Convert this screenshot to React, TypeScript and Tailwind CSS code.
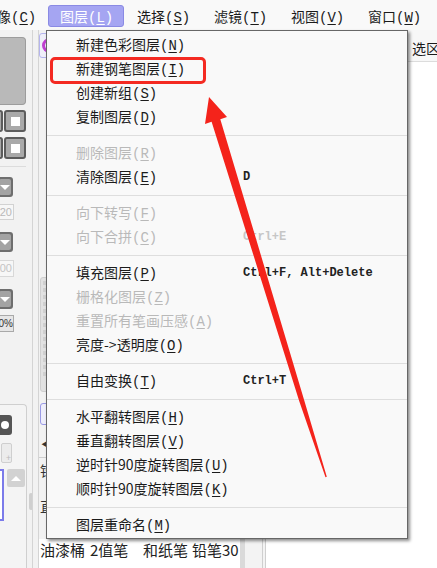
import React from 'react';

type Row =
  | { sep: true }
  | { label: string; k: string; shortcut?: string; off?: boolean };

const rows: Row[] = [
  { label: '新建色彩图层', k: 'N' },
  { label: '新建钢笔图层', k: 'I' },
  { label: '创建新组', k: 'S' },
  { label: '复制图层', k: 'D' },
  { sep: true },
  { label: '删除图层', k: 'R', off: true },
  { label: '清除图层', k: 'E', shortcut: 'D' },
  { sep: true },
  { label: '向下转写', k: 'F', off: true },
  { label: '向下合拼', k: 'C', off: true, shortcut: 'Ctrl+E' },
  { sep: true },
  { label: '填充图层', k: 'P', shortcut: 'Ctrl+F, Alt+Delete' },
  { label: '栅格化图层', k: 'Z', off: true },
  { label: '重置所有笔画压感', k: 'A', off: true },
  { label: '亮度->透明度', k: 'O' },
  { sep: true },
  { label: '自由变换', k: 'T', shortcut: 'Ctrl+T' },
  { sep: true },
  { label: '水平翻转图层', k: 'H' },
  { label: '垂直翻转图层', k: 'V' },
  { label: '逆时针90度旋转图层', k: 'U' },
  { label: '顺时针90度旋转图层', k: 'K' },
  { sep: true },
  { label: '图层重命名', k: 'M' },
];

// label + (X) with the mnemonic underlined
const Label = ({ text, k }: { text: string; k: string }) => (
  <span className="whitespace-nowrap">
    {text}
    <span className="font-['Liberation_Mono',monospace]">
      (<span className="underline underline-offset-2">{k}</span>)
    </span>
  </span>
);

const Drop = ({ className }: { className: string }) => (
  <div className={`${className} -ml-[3px] w-[16px] h-[20px] rounded-[3px] bg-[#6e6e6e] p-[2px]`}>
    <div className="h-full rounded-[2px] bg-[#a3a3a3] flex items-center justify-center">
      <div className="w-0 h-0 border-l-[5px] border-r-[5px] border-t-[5px] border-l-transparent border-r-transparent border-t-white" />
    </div>
  </div>
);

const Square = ({ className }: { className: string }) => (
  <div className={`${className} flex gap-[1px] -ml-[2px]`}>
    <div className="w-[5px] h-[22px] rounded-r-[3px] border-2 border-l-0 border-[#5c5c5c] bg-[#a9a9a9]" />
    <div className="w-[22px] h-[22px] rounded-[3px] border-2 border-[#5c5c5c] bg-[#a9a9a9] flex items-center justify-center">
      <div className="w-[9px] h-[9px] bg-white" />
    </div>
  </div>
);

const LeftPanel = () => (
  <div className="w-[33px] shrink-0 border-r border-[#d4d4d4] bg-[#f2f2f2] flex flex-col overflow-hidden">
    <div className="mt-[7px] w-[26px] h-[68px] rounded-r-[4px] border border-l-0 border-[#9c9c9c] bg-[#b9b9b9]" />
    <Square className="mt-[5px]" />
    <Square className="mt-[5px]" />
    <div className="mt-[7px] w-[26px] h-px bg-[#dcdcdc]" />
    <Drop className="mt-[10px]" />
    <div className="mt-[7px] -ml-[4px] w-[18px] h-[16px] border border-[#d2d2d2] bg-[#f7f7f7] text-right pr-[1px] text-[11px] leading-[14px] text-[#b9b9b9] font-['Liberation_Sans',sans-serif]">20</div>
    <Drop className="mt-[12px]" />
    <div className="mt-[8px] -ml-[4px] w-[18px] h-[17px] border border-[#d8d8d8] bg-[#f7f7f7] text-right pr-[1px] text-[11px] leading-[15px] text-[#c4c4c4] font-['Liberation_Sans',sans-serif]">00</div>
    <Drop className="mt-[12px]" />
    <div className="mt-[6px] -ml-[4px] w-[18px] h-[17px] border border-[#a9a9a9] bg-[#e6e6e6] text-right text-[10px] leading-[15px] text-[#333] font-['Liberation_Sans',sans-serif]">0%</div>
    <div className="mt-[72px] w-[27px] flex-1 rounded-tr-[4px] border-t border-r border-[#cfcfcf] bg-[#f4f4f4] flex flex-col">
      <div className="mt-[10px] -ml-[2px] w-[14px] h-[20px] rounded-[3px] bg-[#555] flex items-center justify-center">
        <div className="w-[8px] h-[8px] rounded-full bg-white" />
      </div>
      <div className="mt-[8px] ml-[1px] w-[11px] h-[20px] rounded-[2px] border border-[#cfcfcf] bg-[#ececec] flex items-end justify-end text-[9px] leading-[9px] text-[#bbb]">+</div>
      <div className="mt-[6px] flex gap-[3px]">
        <div className="w-[4px] h-[52px] border-2 border-l-0 border-[#7b7bea] bg-white" />
        <div className="w-[18px] h-[18px] rounded-[2px] bg-[#d2d2d2] flex items-center justify-center">
          <div className="w-0 h-0 border-l-[5px] border-r-[5px] border-b-[5px] border-l-transparent border-r-transparent border-b-white" />
        </div>
      </div>
      <div className="mt-[-28px] ml-[29px] w-[4px] h-[17px] rounded-[2px] bg-[#cfcfcf]" />
    </div>
  </div>
);

const Strip = () => (
  <div className="w-[8px] shrink-0 bg-[#f2f2f2] flex flex-col">
    <div className="mt-[3px] w-[20px] h-[25px] rounded-[3px] border border-[#b4b4ee] bg-[#efeff9] flex items-center pl-[2px]">
      <div className="w-[15px] h-[15px] rounded-full border-[3px] border-[#c040d0]" />
    </div>
    <div className="mt-[219px] ml-[1px] w-[10px] h-[115px] rounded-[3px] border border-[#cfcfcf] bg-[#e2e2e2] flex flex-col gap-[3px] pt-[3px] pl-[2px]">
      {Array.from({ length: 14 }).map((_, i) => (
        <div key={i} className="w-[4px] h-[4px] bg-[#d0d0d0]" />
      ))}
    </div>
    <div className="mt-[11px] ml-[1px] w-[10px] h-[22px] rounded-[3px] border border-[#9a9ae6] bg-[#eeeefb]" />
    <div className="mt-[14px] ml-[2px] text-[10px] leading-[10px] text-[#333]">◀</div>
    <div className="mt-[8px] h-px w-full bg-[#cfcfcf]" />
    <div className="mt-[4px] ml-[1px] text-[14px] leading-[16px] text-[#333]">铅</div>
    <div className="mt-[20px] ml-[1px] text-[14px] leading-[16px] text-[#333]">直</div>
  </div>
);

const RightCol = () => (
  <div className="w-[29px] shrink-0 bg-white flex flex-col">
    <div className="h-[32px] border-b border-[#dcdcdc] bg-[#f7f7f7] flex items-end pb-[4px] pl-[4px] text-[14px] leading-[18px] whitespace-nowrap">
      选区
    </div>
  </div>
);

const BottomRow = () => (
  <div className="h-[29px] shrink-0 flex bg-white text-[15px] leading-[20px] text-[#222]">
    <div className="w-[51px] pl-[1px] pt-[1px] whitespace-nowrap">油漆桶</div>
    <div className="w-[53px] pt-[1px] whitespace-nowrap">2值笔</div>
    <div className="w-[49px] pt-[1px] whitespace-nowrap">和纸笔</div>
    <div className="w-[48px] pt-[1px] whitespace-nowrap">铅笔30</div>
    <div className="w-[5px] bg-[#dadada]" />
    <div className="w-[17px] bg-[#f3f3f3]" />
    <div className="w-[4px] border-l border-r border-[#cfcfcf] bg-[#f3f3f3]" />
    <div className="flex-1 bg-white" />
  </div>
);

const Arrow = () => (
  <svg className="absolute left-0 top-0 pointer-events-none" width="437" height="568" viewBox="0 0 437 568">
    <polygon
      fill="#f4231b"
      points="209,97 227,117 220.3,119.2 303.9,399.3 326.8,476.8 325.5,477.3 299.1,400.7 211.6,121.8 205,124"
    />
  </svg>
);

export default function App() {
  return (
    <div className="relative w-[437px] h-[568px] overflow-hidden bg-[#f3f3f3] text-[#1b1b1b] font-['Noto_Sans_CJK_SC','Noto_Sans',sans-serif]">
      {/* menu bar */}
      <div className="flex h-[30px] items-start pt-[5px] bg-[#f9f9f9] text-[14px] leading-[20px]">
        <div className="w-[48px] shrink-0 pt-[1px]">
          <div className="-ml-[3px]"><Label text="像" k="C" /></div>
        </div>
        <div className="w-[76px] h-[22px] shrink-0 rounded-[3px] border border-[#8a8ae4] bg-[#a5a5f2] pl-[11px] text-white">
          <Label text="图层" k="L" />
        </div>
        <div className="w-[77px] shrink-0 pl-[13px] pt-[1px]"><Label text="选择" k="S" /></div>
        <div className="w-[77px] shrink-0 pl-[13px] pt-[1px]"><Label text="滤镜" k="T" /></div>
        <div className="w-[77px] shrink-0 pl-[13px] pt-[1px]"><Label text="视图" k="V" /></div>
        <div className="w-[77px] shrink-0 pl-[13px] pt-[1px]"><Label text="窗口" k="W" /></div>
      </div>

      {/* app body behind the menu */}
      <div className="flex h-[538px]">
        <LeftPanel />
        <div className="w-[5px] shrink-0 bg-[#f2f2f2]" />
        <div className="flex-1 flex flex-col border-l border-[#d4d4d4]">
          <div className="flex flex-1 min-h-0">
            <Strip />
            <div className="flex-1 bg-white" />
            <RightCol />
          </div>
          <BottomRow />
        </div>
      </div>

      {/* layer menu */}
      <div className="absolute left-[46px] top-[30px] w-[362px] h-[509px] border border-[#676767] bg-[#f9f9f9] pt-[2px] shadow-[2px_2px_3px_rgba(0,0,0,0.45)] text-[14px]">
        {rows.map((r, i) =>
          'sep' in r ? (
            <div key={i} className="h-[12px] flex items-center">
              <div className="h-px w-full bg-[#dedede]" />
            </div>
          ) : (
            <div key={i} className={`flex h-[24px] items-center pl-[29px] ${r.off ? 'text-[#b9b9b9]' : 'text-[#1b1b1b]'}`}>
              <div className="w-[167px] shrink-0">
                <Label text={r.label} k={r.k} />
              </div>
              {r.shortcut && (
                <div className={`whitespace-pre font-['Liberation_Mono',monospace] text-[12px] font-bold ${r.off ? 'text-[#c6c6c6]' : 'text-[#222]'}`}>
                  {r.shortcut}
                </div>
              )}
            </div>
          )
        )}
        <div className="absolute left-[3px] top-[26px] w-[156px] h-[27px] rounded-[5px] border-[3px] border-[#f42a22]" />
      </div>

      <Arrow />
    </div>
  );
}
